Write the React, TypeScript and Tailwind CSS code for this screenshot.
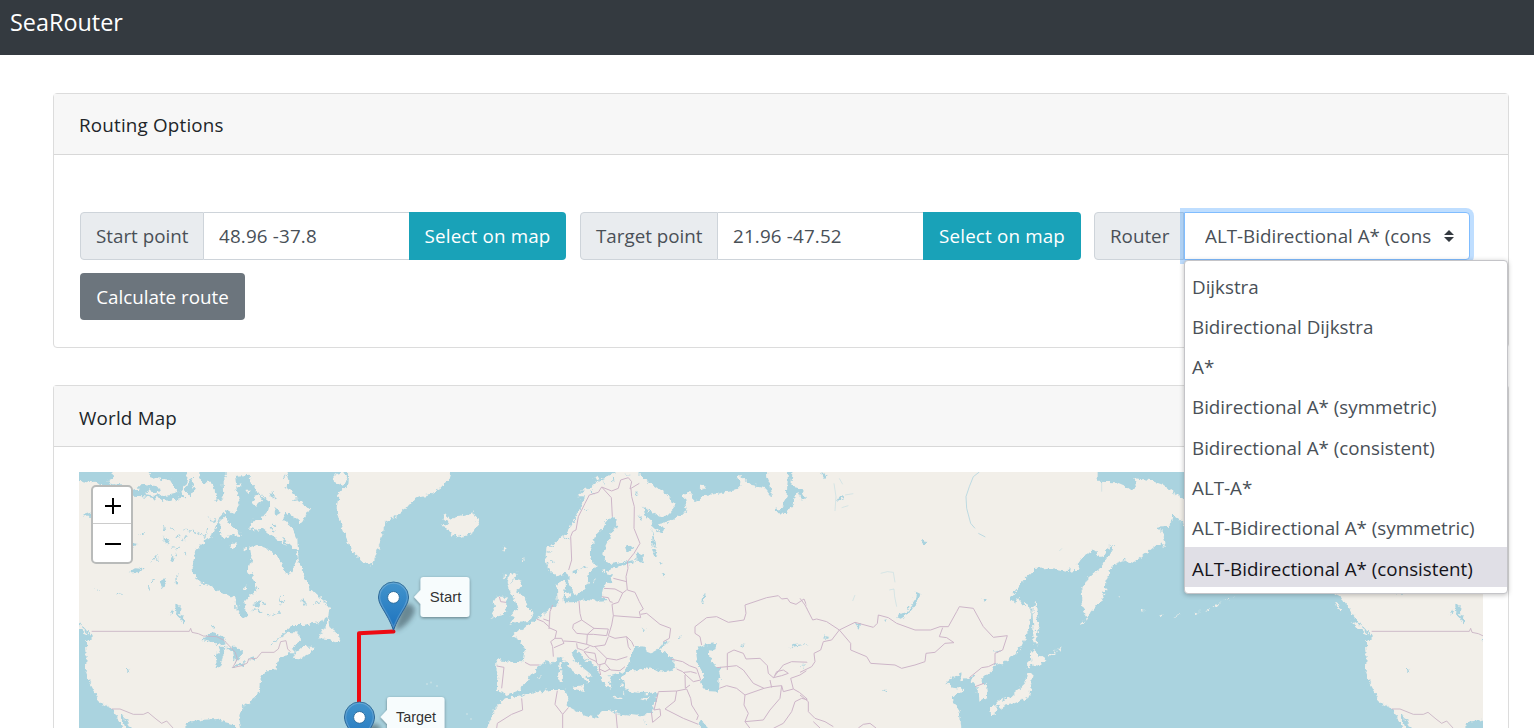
import React from "react";

const routers = [
  "Dijkstra",
  "Bidirectional Dijkstra",
  "A*",
  "Bidirectional A* (symmetric)",
  "Bidirectional A* (consistent)",
  "ALT-A*",
  "ALT-Bidirectional A* (symmetric)",
  "ALT-Bidirectional A* (consistent)",
];

const WATER = "#aad3df";
const LAND = "#f2efe9";

function NorthAmerica() {
  return (
    <g>
      <g filter="url(#coast)">
        <path
          fill={LAND}
          d="M-50,385 L-50,10 L645,10 L655,45 L652,70 L672,90 L695,110 L718,135 L708,150 L695,175 L672,158 L650,142 L640,160 L668,190 L682,222 L686,285 L700,320 L720,370 L740,390 L765,410 L780,430 L778,455 L750,470 L700,480 L670,480 L640,505 L618,528 L655,500 L688,503 L690,530 L662,552 L680,562 L700,545 L735,545 L725,562 L690,580 L668,578 L680,562 L655,562 L640,580 L622,588 L620,612 L585,620 L570,650 L565,690 L540,710 L510,735 L505,755 L512,800 L490,778 L460,770 L440,762 L400,764 L355,770 L345,800 L165,800 L150,770 L125,730 L88,710 L60,658 L47,620 L50,580 L48,530 L66,517 L55,497 L30,480 L5,445 L-25,395Z"
        />
        <path fill={LAND} d="M745,520 L765,482 L777,460 L782,490 L800,503 L812,530 L796,532 L770,522Z" />
        <path fill={LAND} d="M5,468 L25,480 L52,503 L60,512 L40,503 L15,482Z" />
        <path fill={LAND} d="M-45,408 L-36,415 L-24,445 L-38,430Z" />
        <path fill={LAND} d="M838,10 L835,60 L805,90 L800,130 L812,170 L830,220 L848,262 L880,290 L908,300 L918,270 L935,220 L945,172 L975,155 L1010,128 L1035,97 L1080,87 L1112,68 L1136,42 L1145,10Z" />
        <path fill={LAND} d="M790,30 L820,21 L833,45 L818,62 L792,50Z" />
        <g fill={WATER}>
          <path d="M20,10 L125,10 L130,38 L115,45 L125,58 L170,62 L198,78 L215,60 L250,62 L272,72 L262,84 L240,76 L222,86 L250,92 L298,88 L330,80 L345,95 L300,108 L255,100 L220,94 L190,92 L150,64 L90,60 L70,45 L50,55 L20,48Z" />
          <path d="M228,10 L352,10 L346,60 L330,82 L312,66 L300,45 L262,40 L240,32Z" />
          <path d="M388,10 L470,10 L470,35 L458,50 L460,100 L440,105 L434,70 L420,45 L400,55 L388,38Z" />
          <path d="M150,750 L166,758 L190,800 L172,800Z" />
          <path d="M395,525 L428,502 L462,516 L470,535 L440,540 L430,532Z" />
          <path d="M440,605 L438,570 L450,547 L466,542 L460,570 L450,608Z" />
          <path d="M468,545 L500,545 L520,560 L510,575 L495,590 L490,565Z" />
          <path d="M487,609 L500,598 L532,590 L520,602Z M532,582 L560,575 L556,584Z" />
          <path d="M298,430 L312,438 L304,452Z M315,420 L332,418 L330,448 L346,470 L340,478 L322,450Z" />
          <path d="M270,355 L285,335 L290,350 L278,370Z M176,322 L195,310 L225,312 L205,322Z M168,612 L176,612 L180,622 L172,620Z" />
          <path d="M40,150 L66,142 L66,156 L42,154Z M186,232 L205,234 L190,248Z M284,215 L300,222 L294,238 L284,230Z" />
          <path d="M625,400 L640,412 L632,420Z M550,420 L572,405 L566,425Z M425,480 L434,482 L430,492Z M318,328 L328,330 L322,345Z" />
          <path d="M300,270 L314,280 L306,292Z M412,152 L436,170 L428,174Z" />
        </g>
        <g transform="translate(330 15)">
          <path
            fill={WATER}
            d="M165,18 L208,14 L212,38 L232,68 L262,88 L270,100 L265,120 L245,146 L215,152 L208,175 L228,182 L250,175 L275,195 L310,220 L345,240 L356,262 L340,295 L325,316 L310,300 L300,270 L264,235 L230,225 L210,233 L215,265 L205,300 L225,330 L225,360 L205,385 L192,400 L205,440 L190,447 L170,422 L166,382 L130,372 L90,345 L60,340 L35,300 L45,250 L75,210 L100,192 L108,170 L120,140 L140,120 L160,132 L180,100 L170,60Z"
          />
          <g fill={LAND}>
            <path d="M122,150 L134,138 L150,165 L178,182 L185,198 L152,195 L128,208 L120,185Z" />
            <path d="M148,228 L162,214 L172,222 L158,234Z M188,230 L198,228 L197,245 L189,240Z" />
            <path d="M220,82 L238,75 L246,92 L230,106 L220,98Z M188,352 L202,346 L200,360Z" />
            <path d="M165,45 L185,40 L175,55Z M196,60 L206,58 L203,70Z" />
          </g>
          <path fill={WATER} d="M282,112 L302,128 L286,138Z M278,160 L290,168 L280,172Z M320,135 L345,148 L362,168 L345,162Z M305,200 L352,242 L346,250 L312,216Z" />
          <path fill={WATER} d="M268,60 L285,78 L280,92Z M35,25 L45,50 L30,80 L12,60Z" />
        </g>
        <g fill="none" stroke={WATER} strokeWidth="3">
          <path d="M340,195 L375,200 L405,214 M550,415 L575,408 M610,452 L635,440 M628,400 L640,390 M690,405 L705,408 L698,420 M735,415 L755,408 M210,210 L222,206 M245,295 L258,278 M310,250 L330,246 M545,440 L560,432 M75,370 L82,380 M140,385 L155,388 M625,520 L600,540 M410,190 L404,220 M240,350 L252,345 M280,180 L284,195 M300,188 L310,196" />
        </g>
        <g fill="none" stroke={WATER} strokeWidth="6" strokeLinecap="round">
          <path d="M292,225 L290,236 M322,214 L330,210 M348,212 L342,224 M318,262 L322,272 M258,272 L260,282 M236,362 L238,372 M318,345 L320,358 M345,262 L348,266 M565,432 L572,442 M582,412 L586,418 M640,404 L636,414 M700,402 L706,414 M596,452 L604,448 M555,372 L566,374 M600,190 L612,198 M672,106 L690,104 M560,130 L566,120 M652,20 L640,40 M660,60 L645,66" strokeWidth="4" />
        </g>
      </g>
      <g fill="none" stroke="#c9b3c4" strokeWidth="2.6" strokeLinejoin="round">
        <path d="M65,499 H358 L362,490 L366,502 L385,506 L400,513 L440,515 L462,526 L480,545 L496,562 L502,582 L488,608 L515,602 L532,594 L536,582 L560,580 L575,562 L612,562 L625,552 L632,530 L648,527 L653,552 L661,560" />
        <path d="M125,732 L150,732 L190,748 L220,748 L234,742 L258,762 L275,775 L290,768 L310,790" />
      </g>
    </g>
  );
}

function Europe() {
  return (
    <g>
      <g filter="url(#coast)">
        <path
          fill={LAND}
          d="M382,336 L357,312 L347,270 L350,245 L380,228 L410,205 L430,170 L450,130 L465,97 L442,97 L475,70 L500,50 L540,32 L570,10 L610,10 L645,45 L690,75 L720,95 L735,130 L715,152 L690,152 L660,140 L640,125 L645,150 L662,165 L670,188 L695,207 L702,190 L690,175 L722,168 L745,150 L772,142 L765,110 L760,85 L785,85 L792,108 L830,90 L870,85 L920,75 L935,60 L918,35 L930,30 L965,60 L1000,65 L1026,97 L1022,60 L1012,35 L1010,10 L1160,10 L1160,800 L832,800 L828,775 L812,765 L808,772 L818,800 L165,800 L178,775 L190,738 L225,700 L250,698 L300,685 L360,675 L405,675 L415,700 L410,722 L440,738 L470,750 L500,758 L512,735 L540,735 L560,745 L620,752 L665,745 L672,720 L682,682 L650,685 L610,682 L585,670 L578,640 L590,622 L620,615 L650,607 L700,620 L735,612 L738,595 L715,570 L690,555 L714,530 L700,530 L688,545 L665,562 L645,548 L615,545 L602,575 L590,612 L580,620 L560,625 L535,632 L550,655 L536,652 L542,672 L525,662 L512,635 L500,605 L460,578 L440,555 L425,560 L430,585 L452,605 L488,635 L465,632 L482,650 L472,657 L458,640 L430,620 L410,592 L385,580 L368,596 L340,590 L325,605 L297,638 L275,670 L250,680 L230,690 L215,680 L200,677 L205,640 L198,605 L200,585 L240,590 L280,592 L286,560 L272,525 L245,510 L250,505 L282,490 L300,475 L325,460 L355,432 L385,418 L382,395 L380,358 L404,345 L405,370 L400,395 L402,412 L430,412 L470,402 L510,410 L536,408 L515,395 L518,372 L525,350 L548,352 L545,335 L532,318 L560,305 L598,298 L618,285 L580,290 L540,297 L522,285 L520,268 L525,245 L540,215 L562,180 L558,160 L532,162 L520,190 L495,215 L480,250 L480,282 L497,300 L476,330 L473,355 L462,376 L440,390 L427,380 L418,350 L411,320Z"
        />
        <g fill={LAND}>
          <path d="M238,325 L262,320 L250,343 L275,350 L265,380 L285,400 L295,430 L312,445 L300,468 L265,470 L235,480 L252,460 L245,450 L262,430 L255,405 L240,385 L230,350Z" />
          <path d="M200,395 L230,395 L228,430 L220,450 L185,458 L195,435 L188,415Z" />
          <path d="M45,148 L62,165 L80,153 L105,150 L132,142 L149,175 L130,200 L95,218 L65,208 L50,187 L36,182 L56,174 L37,160Z" />
          <path d="M428,665 L462,660 L460,678 L430,671Z M384,620 L397,618 L395,648 L386,650Z M388,594 L396,592 L395,614 L388,612Z" />
          <path d="M548,695 L575,698 L573,703 L550,700Z M630,702 L658,694 L645,708Z M320,638 L332,634 L330,641Z" />
          <path d="M408,384 L420,382 L422,398 L408,396Z M486,350 L495,335 L492,352Z M806,66 L820,56 L829,68 L818,80Z M515,318 L528,314 L524,328Z" />
          <path d="M215,245 L224,242 L220,265Z M278,285 L284,280 L282,292Z M225,325 L232,335 L224,340Z" />
          <path d="M455,75 L470,68 L466,78Z M490,40 L505,32 L508,44Z M575,655 L580,665 L570,662Z M565,640 L572,645 L564,650Z M578,680 L584,688 L576,686Z" />
        </g>
        <g fill={WATER}>
          <path d="M798,552 L830,538 L862,533 L856,550 L833,560 L845,588 L860,605 L869,640 L867,680 L830,678 L814,660 L822,630 L805,600 L800,575Z" />
          <path d="M618,260 L642,270 L636,294 L616,286Z M662,232 L682,268 L672,272Z M428,318 L444,312 L436,328Z M695,322 L710,328 L702,334Z" />
          <path d="M1075,10 L1088,10 L1084,65 L1112,70 L1128,100 L1118,108 L1106,82 L1094,86 L1092,118 L1070,145 L1032,140 L1030,132 L1060,128 L1070,95Z" />
          <path d="M856,605 L875,605 L868,618 L858,615Z M1080,552 L1088,540 L1140,537 L1088,545Z M814,410 L820,390 L828,388 L820,405 L818,418Z M1112,600 L1128,598 L1120,605Z" />
          <path d="M588,240 L610,246 L600,262 L590,252Z M622,150 L640,165 L630,162Z M580,20 L600,30 L590,32Z M635,490 L650,496 L640,498Z M742,518 L756,510 L748,522Z M930,538 L945,540 L935,545Z" />
          <path d="M578,622 L604,616 L596,624Z M665,190 L672,220 L678,245 L668,240Z M616,80 L624,92 L618,90Z M690,290 L700,288 L694,296Z" />
        </g>
        <path fill="none" stroke={WATER} strokeWidth="3" d="M350,260 L368,262 M352,240 L372,248 M360,285 L374,292 M400,215 L412,222 M455,310 L470,306 M465,130 L475,138 M485,75 L492,88 M520,50 L525,62 M550,40 L552,52 M248,345 L240,352 M640,768 L650,780" />
      </g>
      <g fill={LAND}>
        <path d="M648,548 L672,545 L680,555 L662,565 L650,560Z" />
      </g>
      <g fill="none" stroke="#cdb5c8" strokeWidth="3" strokeLinejoin="round">
        <path d="M416,315 L425,285 L422,215 L428,200 L438,195 L445,155 L465,115 L478,90 L505,82 L515,66 L545,78 L565,70 L572,45 L595,38 L605,50 L600,72 L628,55 M515,66 L544,98 L547,155 M603,72 L605,95 L613,125 L612,190 L630,235 L612,265 L592,290 L594,310 L588,335 L592,375 L615,382 L628,410 L640,432 L628,440 L632,458 L588,455 L550,452 L546,418 L565,412 L578,384 L590,375" />
        <path d="M550,340 L590,350 M522,370 L555,372 L578,384 M515,395 L535,398 L540,410 L548,412 M632,448 L650,445 L690,478 L722,490 L718,520 L700,530 M550,452 L545,480 L535,512 L555,520 L590,515 L605,530 L612,545 M590,515 L595,545 L602,555" />
        <path d="M368,420 L360,440 L357,492 M320,462 L340,470 L357,485 M340,462 L357,468 M357,488 L380,498 L375,520 L362,530 L368,545 L370,575 M375,520 L395,520 L402,535 L372,548 M400,528 L435,530 L470,538 L472,508 M447,408 L450,445 L455,465 L430,478 L428,490 L440,505 L472,508 L492,490 L455,465 M492,490 L535,492 L530,512 L490,508 L472,508 M470,538 L490,545 L525,540 L535,515 M440,535 L442,550 L460,556 L478,545 M462,560 L495,565 L500,590 L478,580Z M495,545 L505,555 L530,580 L525,595 L505,600 L498,590 M530,580 L560,585 L592,575 M525,595 L542,615 L570,617 L585,605 M510,600 L508,612 L525,620 L540,612 M508,612 L512,630" />
        <path d="M285,592 L300,600 L327,600 M200,603 L222,607 L215,670 M275,700 L278,735 L245,748 L202,775 L200,790 M382,677 L375,718 L398,748 L415,728 M398,748 V790 M558,745 L562,790 M685,680 L740,678 L770,672 L782,700 L785,720 L805,752 L800,765 M740,678 L735,708 L705,732 L760,760 L805,778 M685,682 L672,735 L690,732 L692,752 L668,772 L664,740" />
        <path d="M722,582 L758,590 L778,602 L800,610 L812,645 L790,650 L770,632 L758,620 L740,612 M762,622 L782,620 L800,625 M765,630 L766,670 L780,660" />
        <path d="M815,540 L810,515 L795,505 L795,485 L830,458 L860,455 L895,472 L942,465 L948,445 L945,420 L1010,398 L1045,392 L1055,402 L1072,400 L1080,412 L1098,418 L1122,402 L1142,450 M892,615 V565 L912,555 L940,565 L948,582 L990,580 L1012,602 L1015,625 L1030,638 L1060,600 L1085,590 L1142,592 M860,608 L892,605 L920,602 L940,615 L970,655 L1002,670 M868,670 L890,662 L920,670 L945,690 L1002,670 L1025,665 L1055,662 L1050,700 L1020,735 L1000,765 L945,770 L955,745 L942,720 L945,690 M1030,638 L1055,632 L1075,625 L1060,615 L1040,620 L1034,632 M1020,645 L1025,668 M1055,662 L1060,680 L1090,672 L1082,640 L1110,630 L1140,610 M1090,672 L1108,682 L1135,705 L1115,700 L1095,710 L1085,740 L1060,775 L1030,790 M945,770 L960,790" />
        <path d="M208,395 L212,410 L228,412" />
      </g>
    </g>
  );
}

function EastAsia() {
  return (
    <g>
      <g filter="url(#coast)">
        <path
          fill={LAND}
          d="M22,10 L890,10 L890,50 L950,52 L975,62 L995,76 L1008,68 L1003,40 L1050,45 L1090,60 L1155,108 L1170,190 L1140,167 L1118,150 L1110,182 L1070,185 L1090,205 L1098,242 L1070,237 L1030,270 L1000,295 L970,285 L940,297 L920,345 L915,380 L900,410 L872,440 L860,464 L848,420 L845,375 L860,345 L900,310 L930,270 L942,240 L928,242 L910,275 L893,280 L890,255 L860,262 L830,300 L836,314 L800,318 L750,308 L705,312 L680,335 L650,375 L630,400 L648,418 L655,395 L665,412 L690,425 L695,440 L688,490 L660,550 L630,582 L600,597 L580,600 L572,618 L545,642 L562,665 L565,700 L532,710 L530,670 L515,652 L520,632 L500,640 L480,650 L485,625 L468,632 L440,652 L458,668 L492,672 L455,700 L480,745 L485,800 L22,800Z"
        />
        <g fill={LAND}>
          <path d="M697,432 L707,406 L712,460 L721,494 L708,502 L712,545 L700,530 L700,490Z" />
          <path d="M695,555 L720,573 L737,585 L712,605 L692,600 L680,612 L682,595 L697,588Z" />
          <path d="M682,620 L698,628 L692,660 L687,697 L665,706 L640,716 L610,722 L588,718 L600,705 L632,695 L655,675 L675,655Z" />
          <path d="M568,726 L590,720 L587,745 L574,748Z M594,724 L620,720 L602,732Z" />
          <path d="M840,480 L858,464 L852,476Z M775,550 L788,544 L780,554Z M745,570 L770,556 L750,575Z M1022,432 L1034,434 L1028,440Z M1080,452 L1092,448 L1088,454Z M952,390 L960,400 L954,396Z M1120,454 L1145,450 L1130,456Z" />
          <path d="M1180,445 L1200,440 L1190,448Z M1215,438 L1232,430 L1222,440Z M1240,425 L1265,408 L1250,424Z M1270,408 L1300,394 L1284,406Z" />
        </g>
        <g fill={WATER}>
          <path d="M288,455 L320,440 L343,410 L349,380 L358,383 L350,415 L325,447 L302,461Z" />
          <path d="M545,402 L558,402 L548,412Z M112,108 L118,92 L132,90 L122,106Z M60,21 L80,30 L70,42Z M246,672 L258,676 L254,684Z M168,478 L180,474 L176,488Z M360,225 L382,228 L372,242Z M252,462 L260,460 L256,472Z" />
          <path d="M72,512 L88,516 L80,522Z M582,560 L602,556 L594,564Z M925,318 L942,316 L930,326Z" />
        </g>
      </g>
      <g fill="none" stroke={WATER} strokeWidth="3">
        <path strokeOpacity="0.75" d="M538,21 L520,35 L508,65 L498,95 L500,130 L512,175 L525,190 M535,205 L556,216" />
        <path strokeOpacity="0.6" strokeWidth="2" d="M102,55 L108,95 L105,138 M118,40 L128,58 M135,90 L160,86 M125,128 L145,122 M242,325 L262,320 L280,322 L285,352 M268,375 L282,372 L284,395 L290,425 M158,408 L165,390 M778,258 L786,250 M905,50 V80" />
      </g>
      <g fill="none" stroke="#cdb5c8" strokeWidth="3" strokeLinejoin="round">
        <path d="M0,400 L15,420 L38,465 L50,462 L80,470 L118,495 L165,472 L220,487 L232,475 L235,450 L265,458 L290,475 L345,495 L392,495 L420,485 L445,485 L470,440 L478,425 L520,430 L550,485 L580,517 L622,512 L608,555 L585,565 L585,595 L565,605 L545,608 L508,638" />
        <path d="M118,495 L152,535 L152,555 L200,575 L212,595 L285,600 L305,610 L345,600 L375,590 L378,565 L405,562 L435,535 L462,533 L440,518 L418,515 L428,488 M118,495 L95,525 L70,530 L62,555 L42,565 L45,590 L35,605 L0,622 M525,665 L552,655 M0,690 L25,710 L25,740 L45,760 L75,770 L100,785 M175,789 L190,778 L210,775 L228,789 M40,770 L60,789" />
      </g>
    </g>
  );
}

function WorldMap() {
  return (
    <svg className="block h-[256px] w-[1404px] shrink-0" viewBox="79 472 1404 256" aria-label="World map">
      <defs>
        <filter id="coast" x="-5%" y="-5%" width="110%" height="110%">
          <feTurbulence type="fractalNoise" baseFrequency="0.07" numOctaves="3" seed="4" result="noise" />
          <feDisplacementMap in="SourceGraphic" in2="noise" scale="20" xChannelSelector="R" yChannelSelector="G" />
        </filter>
        <linearGradient id="pin" x1="0" y1="0" x2="0" y2="1">
          <stop offset="0" stopColor="#4294cc" />
          <stop offset="1" stopColor="#1d72be" />
        </linearGradient>
        <linearGradient id="pinEdge" x1="0" y1="0" x2="0" y2="1">
          <stop offset="0" stopColor="#2e6c97" />
          <stop offset="1" stopColor="#2b5f94" />
        </linearGradient>
        <filter id="soft" x="-50%" y="-50%" width="200%" height="200%">
          <feGaussianBlur stdDeviation="2.4" />
        </filter>
        <filter id="tipShadow" x="-20%" y="-20%" width="150%" height="160%">
          <feDropShadow dx="0" dy="1" stdDeviation="1.4" floodColor="#000" floodOpacity="0.4" />
        </filter>
        <g id="marker">
          <path d="M1,0 L8,-24 C14,-31 23,-26 21,-19 C18,-10 8,-2 1,0Z" fill="#2c3e46" opacity="0.5" filter="url(#soft)" />
          <path
            d="M0,-0.8 C-2.5,-8.5 -7,-16 -11.5,-23.5 C-13.8,-27.5 -15,-30.5 -15,-34 A15,15 0 0 1 15,-34 C15,-30.5 13.8,-27.5 11.5,-23.5 C7,-16 2.5,-8.5 0,-0.8Z"
            fill="url(#pin)"
            stroke="url(#pinEdge)"
          />
          <path
            d="M0,-4 C-2.5,-10 -6,-17 -10.5,-24 C-12.8,-28 -13.8,-30.5 -13.8,-34 A13.8,13.8 0 0 1 13.8,-34 C13.8,-30.5 12.8,-28 10.5,-24 C6,-17 2.5,-10 0,-4Z"
            fill="none"
            stroke="#fff"
            strokeOpacity="0.18"
            strokeWidth="1.2"
          />
          <circle cy="-33.6" r="5.9" fill="#fff" stroke="#2f6f9f" strokeWidth="1" />
        </g>
      </defs>
      <rect x="79" y="472" width="1404" height="256" fill={WATER} />
      <g transform="translate(70 465) scale(0.33333)"><NorthAmerica /></g>
      <g transform="translate(1350 465) scale(0.33333)"><NorthAmerica /></g>
      <g transform="translate(430 465) scale(0.33333)"><Europe /></g>
      <g transform="translate(800 465) scale(0.33333)"><EastAsia /></g>
      <g fill="#c5dfe4">
        <circle cx="427" cy="684" r="1" /><circle cx="431" cy="682.500" r="1" /><circle cx="437" cy="686" r="1" />
        <circle cx="467" cy="714" r="1" /><circle cx="471" cy="719" r="1" />
      </g>
      <path d="M393.500,631.500 L359,633.300 V751" fill="none" stroke="#ee0a12" strokeWidth="4" strokeLinecap="round" strokeLinejoin="round" />
      <use href="#marker" x="393.500" y="631" />
      <use href="#marker" x="359.500" y="751" />
      <g filter="url(#tipShadow)" fill="#f7fcfd">
        <path d="M423.500,577 H466.500 Q469.500,577 469.500,580 V614 Q469.500,617 466.500,617 H423.500 Q420.500,617 420.500,614 V604 L414,597 L420.500,590 V580 Q420.500,577 423.500,577Z" />
        <path d="M389.500,697 H441.500 Q444.500,697 444.500,700 V734 H387 V724 L380.500,717 L387,710 V700 Q387,697 389.500,697Z" />
      </g>
      <g className="font-['Liberation_Sans']" fontSize="14.400" fill="#333">
        <text x="429.800" y="602" textLength="31.500" lengthAdjust="spacingAndGlyphs">Start</text>
        <text x="396" y="722" textLength="40" lengthAdjust="spacingAndGlyphs">Target</text>
      </g>
    </svg>
  );
}

type PointFieldProps = { label: string; value: string; labelClass: string; buttonClass: string };

function PointField({ label, value, labelClass, buttonClass }: PointFieldProps) {
  return (
    <div className="flex h-12">
      <span className={`flex items-center whitespace-nowrap rounded-l-[4px] border border-[#ced4da] bg-[#e9ecef] pl-[15px] pt-px ${labelClass}`}>{label}</span>
      <input
        className="w-[205px] border-y border-[#ced4da] bg-white pl-[15px] pt-px tracking-[0.17px] text-[#495057] outline-none"
        defaultValue={value}
      />
      <button className={`rounded-r-[4px] bg-[#19a2b8] pt-px tracking-[0.17px] text-white ${buttonClass}`}>Select on map</button>
    </div>
  );
}

export default function App() {
  return (
    <div className="h-[728px] w-[1534px] overflow-hidden bg-white font-['Open_Sans',sans-serif] text-[18.8px] text-[#212529]">
      <nav className="flex h-[55px] items-start bg-[#343a40] pl-[10px] pt-[4px] text-[23.4px] leading-[36px] text-white">SeaRouter</nav>
      <main className="flex flex-col gap-[37px] pl-[53px] pt-[38px]">
        <section className="h-[255px] w-[1456px] rounded-[4px] border border-[#dcdcdc]">
          <h2 className="flex h-[61px] items-center border-b border-[#d8d8d8] bg-[#f7f7f7] pl-[25px] pt-0.5 tracking-[0.2px]">Routing Options</h2>
          <div className="flex flex-col items-start gap-[13px] pl-[26px] pt-[57px] text-[#495057]">
            <div className="flex">
              <div className="mr-[14px]"><PointField label="Start point" value="48.96 -37.8" labelClass="w-[124px]" buttonClass="w-[157px]" /></div>
              <div className="mr-[13px]"><PointField label="Target point" value="21.96 -47.52" labelClass="w-[138px]" buttonClass="w-[158px]" /></div>
              <div className="flex h-12">
                <span className="flex w-[90px] items-center rounded-l-[4px] border border-[#ced4da] bg-[#e9ecef] pl-[15px] pt-px">Router</span>
                <div className="relative w-[286px]">
                  <button className="flex h-12 w-full items-center justify-between rounded-r-[4px] border border-[#80bdff] bg-white pl-5 pr-[15px] shadow-[0_0_0_4px_rgba(0,123,255,0.25)]">
                    <span className="w-[232px] overflow-hidden whitespace-nowrap pt-px text-left">ALT-Bidirectional A* (cons</span>
                    <svg className="h-3 w-[10px] shrink-0" viewBox="0 0 10 12" fill="#343a40"><path d="M0,5 L5,0 L10,5Z M0,7 L5,12 L10,7Z" /></svg>
                  </button>
                  <ul className="absolute left-0 top-12 z-10 flex h-[334px] w-[324px] flex-col rounded-[4px] border border-[#c4c4c8] bg-white pt-[4px] shadow-[0_1px_5px_rgba(0,0,0,0.25)]">
                    {routers.map((name, i) => (
                      <li
                        key={name}
                        className={`flex h-[40.3px] items-center whitespace-nowrap pl-[7px] pt-[3px] ${i === 7 ? "bg-[#e0dfe6] text-[#15141a]" : ""}`}
                      >
                        {name}
                      </li>
                    ))}
                  </ul>
                </div>
              </div>
            </div>
            <button className="h-[47px] w-[165px] rounded-[4px] bg-[#6c757d] pt-0.5 text-white">Calculate route</button>
          </div>
        </section>
        <section className="w-[1456px] rounded-t-[4px] border border-b-0 border-[#dcdcdc]">
          <h2 className="flex h-[61px] items-center border-b border-[#d8d8d8] bg-[#f7f7f7] pl-[25px] pt-1 tracking-[0.2px]">World Map</h2>
          <div className="relative pl-[25px] pt-[25px]">
            <WorldMap />
            <div className="absolute left-[37px] top-[38px] flex h-[79px] w-[42px] flex-col rounded-[5px] border-2 border-[#b9bbba] bg-white">
              <button className="flex h-[37px] items-center justify-center border-b border-[#ccc] pl-0.5 pt-0.5" aria-label="Zoom in">
                <svg className="size-4" viewBox="0 0 16 16" stroke="#000" strokeWidth="2"><path d="M0,8 H16 M8,0 V16" shapeRendering="crispEdges" /></svg>
              </button>
              <button className="flex grow items-center justify-center pl-0.5 pt-0.5" aria-label="Zoom out">
                <svg className="size-4" viewBox="0 0 16 16" stroke="#000" strokeWidth="2"><path d="M0,8 H16" shapeRendering="crispEdges" /></svg>
              </button>
            </div>
          </div>
        </section>
      </main>
    </div>
  );
}
